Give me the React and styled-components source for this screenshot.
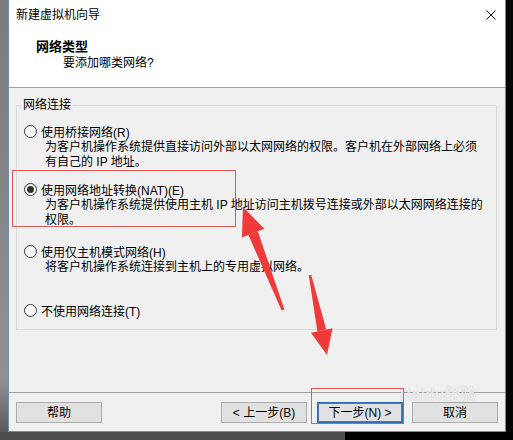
import styled, { createGlobalStyle } from 'styled-components';

const GlobalStyle = createGlobalStyle`
  html, body {
    margin: 0;
    padding: 0;
  }

  body {
    width: 513px;
    height: 440px;
    overflow: hidden;
    background: #000;
    font-family: "Liberation Sans", "Noto Sans CJK SC", sans-serif;
    font-size: 12px;
    color: #000;
  }
`;

const Desktop = styled.div`
  position: relative;
  width: 513px;
  height: 440px;
  display: grid;
  grid-template-columns: 8px 498px 7px;
  grid-template-rows: 432px 8px;
`;

const LeftStrip = styled.div`
  background: linear-gradient(#7b7b7b, #909090 88%, #5a5a5a);
`;

const RightStrip = styled.div`
  background: #050505;
`;

const BottomStrip = styled.div`
  grid-column: 1 / -1;
  background: linear-gradient(90deg, #4d4d4d 0, #4d4d4d 345px, #000 345px);
`;

const Window = styled.div`
  display: flex;
  flex-direction: column;
  min-height: 0;
  background: #f0f0f0;
  border: 1px solid #6f8cb3;
  border-top: none;
`;

const TitleBar = styled.div`
  height: 29px;
  flex-shrink: 0;
  display: flex;
  align-items: center;
  justify-content: space-between;
  padding: 0 9px 0 7px;
  background: #fff;
`;

const Title = styled.span`
  line-height: 16px;
`;

const Header = styled.div`
  height: 59px;
  flex-shrink: 0;
  box-sizing: border-box;
  padding: 10px 0 0 27px;
  background: #fff;
  border-bottom: 1px solid #a0a0a0;
`;

const HeaderTitle = styled.div`
  font-weight: bold;
  font-size: 13px;
  line-height: 16px;
`;

const HeaderSub = styled.div`
  line-height: 16px;
  padding-left: 27px;
`;

const Body = styled.div`
  flex: 1;
  display: flex;
  flex-direction: column;
  padding: 9px 8px 0 7px;
`;

const GroupBox = styled.fieldset`
  margin: 0;
  min-width: 0;
  padding: 0 0 11px 7px;
  border: 1px solid #dcdcdc;
`;

const GroupLabel = styled.legend`
  margin-left: -3px;
  padding: 0 2px;
  line-height: 16px;
`;

const Option = styled.div`
  margin-top: ${({ $gap }) => $gap}px;
`;

const OptionRow = styled.div`
  display: flex;
  align-items: center;
  gap: 4px;
  height: 16px;
`;

const Radio = styled.span`
  box-sizing: border-box;
  width: 13px;
  height: 13px;
  border-radius: 50%;
  border: 1px solid #333;
  background: #fff;
  display: flex;
  align-items: center;
  justify-content: center;

  &::after {
    content: '';
    width: 7px;
    height: 7px;
    border-radius: 50%;
    background: #333;
    display: ${({ $checked }) => ($checked ? 'block' : 'none')};
  }
`;

const Description = styled.div`
  margin-top: 1px;
  padding-left: 21px;
  line-height: 14px;
`;

const Footer = styled.div`
  flex-shrink: 0;
  display: flex;
  padding: 9px 7px 8px 7px;
  border-top: 1px solid #a0a0a0;
`;

const Spacer = styled.div`
  flex: 1;
`;

const Button = styled.button`
  box-sizing: border-box;
  width: 86px;
  height: 21px;
  margin-left: ${({ $gap }) => $gap || 0}px;
  padding: 0;
  font-family: inherit;
  font-size: 12px;
  line-height: 16px;
  color: #000;
  background: #e1e1e1;
  border: 1px solid #adadad;
  border-radius: 0;

  ${({ $primary }) =>
    $primary &&
    `
    border-color: #2b6cb0;
    box-shadow: inset 0 0 0 1px #3d7fc4;
  `}
`;

const Overlay = styled.svg`
  position: absolute;
  inset: 0;
  pointer-events: none;
`;

const Watermark = styled.span`
  position: absolute;
  left: 400px;
  top: 386px;
  font-size: 16px;
  line-height: 18px;
  font-weight: bold;
  color: rgba(255, 255, 255, 0.75);
  text-shadow: 0 0 1px rgba(0, 0, 0, 0.25);
  pointer-events: none;
`;

const CloseIcon = () => (
  <svg width="10" height="10" viewBox="0 0 10 10">
    <path d="M0.5 0.5L9.5 9.5M9.5 0.5L0.5 9.5" stroke="#111" strokeWidth="1" />
  </svg>
);

const options = [
  {
    id: 'bridged',
    label: '使用桥接网络(R)',
    lines: [
      '为客户机操作系统提供直接访问外部以太网网络的权限。客户机在外部网络上必须',
      '有自己的 IP 地址。',
    ],
    gap: 10,
  },
  {
    id: 'nat',
    label: '使用网络地址转换(NAT)(E)',
    lines: [
      '为客户机操作系统提供使用主机 IP 地址访问主机拨号连接或外部以太网网络连接的',
      '权限。',
    ],
    gap: 12,
    checked: true,
  },
  {
    id: 'hostonly',
    label: '使用仅主机模式网络(H)',
    lines: ['将客户机操作系统连接到主机上的专用虚拟网络。'],
    gap: 16,
  },
  {
    id: 'none',
    label: '不使用网络连接(T)',
    lines: [],
    gap: 28,
  },
];

const App = () => (
  <>
    <GlobalStyle />
    <Desktop>
      <LeftStrip />
      <Window>
        <TitleBar>
          <Title>新建虚拟机向导</Title>
          <CloseIcon />
        </TitleBar>
        <Header>
          <HeaderTitle>网络类型</HeaderTitle>
          <HeaderSub>要添加哪类网络?</HeaderSub>
        </Header>
        <Body>
          <GroupBox>
            <GroupLabel>网络连接</GroupLabel>
            {options.map(({ id, label, lines, gap, checked }) => (
              <Option key={id} $gap={gap}>
                <OptionRow>
                  <Radio $checked={checked} />
                  <span>{label}</span>
                </OptionRow>
                {lines.map((line) => (
                  <Description key={line}>{line}</Description>
                ))}
              </Option>
            ))}
          </GroupBox>
        </Body>
        <Footer>
          <Button>帮助</Button>
          <Spacer />
          <Button>&lt; 上一步(B)</Button>
          <Button $gap={10} $primary>下一步(N) &gt;</Button>
          <Button $gap={9}>取消</Button>
        </Footer>
      </Window>
      <RightStrip />
      <BottomStrip />

      <Watermark>Baidu经验</Watermark>

      <Overlay width="513" height="440" viewBox="0 0 513 440">
        <rect x="12.5" y="170.5" width="223" height="56" fill="none" stroke="#e05a5a" />
        <rect x="311.5" y="388.5" width="92" height="35" fill="none" stroke="#e05a5a" />
        {/* upward arrow pointing at the NAT option */}
        <polygon points="284.4,309.5 281.6,310.5 248.4,234.9 257.8,231.3" fill="#f03a3a" />
        <polygon points="243,207 264.3,228.8 241.9,237.4" fill="#f03a3a" />
        {/* downward arrow pointing at the next button */}
        <polygon points="311.2,274.8 308.8,275.2 317.4,331.5 326.2,329.6" fill="#f03a3a" />
        <polygon points="327,355 332.6,328.3 311,332.8" fill="#f03a3a" />
      </Overlay>
    </Desktop>
  </>
);

export default App;
